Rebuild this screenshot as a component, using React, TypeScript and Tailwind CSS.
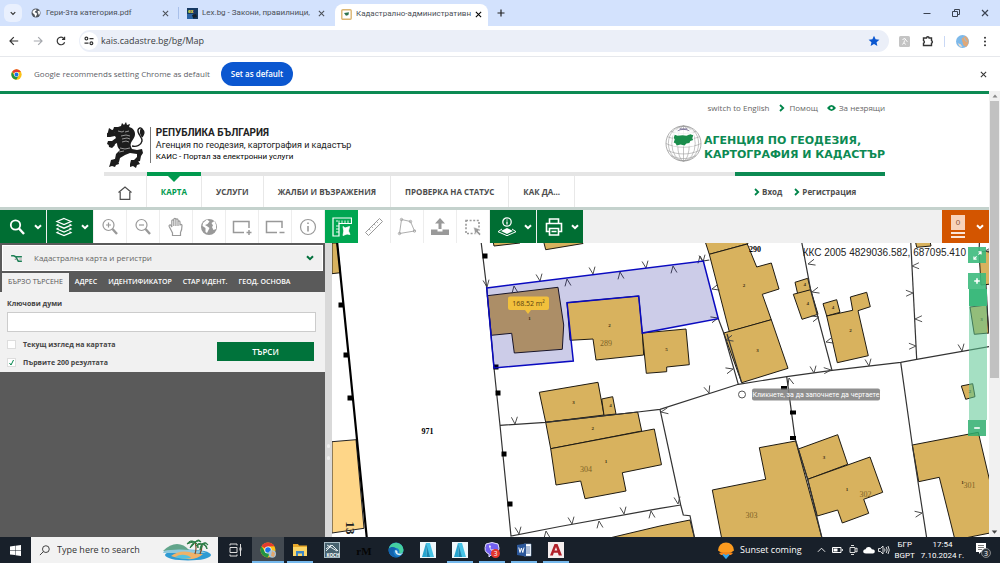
import { useState, type ReactNode } from 'react'

const NAV = ['УСЛУГИ', 'ЖАЛБИ И ВЪЗРАЖЕНИЯ', 'ПРОВЕРКА НА СТАТУС', 'КАК ДА...']
const SEARCH_TABS = ['БЪРЗО ТЪРСЕНЕ', 'АДРЕС', 'ИДЕНТИФИКАТОР', 'СТАР ИДЕНТ.', 'ГЕОД. ОСНОВА']

// map geometry, all in the same coordinate space as the map viewBox
const BUILDINGS = [
  '332,243 337,243 340.5,272.7 332,273.7',
  '493,241 494,246 520,243 520,241',
  '543.5,241 545.7,249.7 583,243.5 583,241',
  '567,302.7 638.7,296 642.3,333 643.7,355 596,360 593,339 570,340.3',
  '642.3,333 686,329 689.3,364.7 666.7,367 666.7,371.7 646.3,373.3',
  '705,241 709.3,254.3 748,243.7 747,241',
  '709.3,254.3 747.3,244 756.7,267 771.3,263 779,289 762.3,294.3 771.3,319.7 729.3,331.7',
  '723.7,333 771.3,319.7 788,368.3 741.7,382.7',
  '795,282.3 807.7,278.3 810.7,290 797.7,294',
  '793.3,294.3 810.7,289.7 818,314.3 802,319.3',
  '823,303.7 836.7,299.7 840,312.3 826.7,316',
  '826.7,316 852.7,310.3 850.3,297 866.7,292.3 870.3,306.7 858,310.7 868.3,355.7 837.3,362.7',
  '915.3,241 916.7,247.3 931,246 930,241',
  '979,251.7 992,251 992,284 981,285',
  '970,307 986.7,305 989,333 974.3,334.3',
  '961.3,386 972.7,383.7 975,396.7 965.7,399.3',
  '912.3,445 978.3,432.3 990,482 990,533 955,540 939.3,477.3 918.7,481.7',
  '759.3,447.7 795.7,441 822.5,540 722,540 712.3,490 765.7,479.3',
  '798.3,449 837.7,434.7 847.7,464.3 807.7,479.3',
  '807.7,479.3 870,457 882.7,492.3 863.7,499.3 868.7,513.3 842.3,523 837.7,510 817.3,516',
  '601,540 660,526 690,520 695,540',
  '539.3,392.3 598,382.3 604,415 545.7,422.3',
  '601.7,399 612.7,396.7 616,414 604,415.3',
  '545.7,422.3 637.7,412 641.7,431 550.7,448.7',
  '550.7,448.7 654.3,429 661.5,464.7 622.3,472.7 626,491 585,498.7 580.7,481 556,485',
]

const BOUNDARIES = [
  '481,241 486.7,288 494,368 500,425.3 511,536 560,526.5 660,508.3 680.7,505',
  '500,425.3 545.7,422.3 637.7,412 660,409.3 738.3,384.3 786.7,376.7 832,370.3 900.7,362.3 916.7,359.3 990,346.5',
  '718.3,318.7 723.7,333 738.3,384.3',
  '727,334 741.7,382.7',
  '703.3,261 709.3,260',
  '801.5,241 810.7,290 832,370.3',
  '910.7,241 916.7,359.3',
  '979.5,241 979,251.7',
  '986,285 988.5,332',
  '900.7,362.3 912.3,445 927,540',
  '786.7,376.7 795,438.3 807.7,479.3 822.5,540',
  '660,409.3 680.7,505 683.3,515 690,515.7 695,540',
]

// fence ticks: x, y of the tip and rotation (0 points down)
const TICKS: [number, number, number][] = [
  [487, 287, -8], [514, 286, 172], [540, 281, -8], [567, 279, 172], [593, 274, -8], [620, 272, 172],
  [646, 268, -8], [673, 266, 172], [700, 256, 172], [703, 262, -8], [712, 289, 75], [718, 318, -105],
  [726, 340, 75], [733, 369, -105], [808, 264, 75], [812, 292, 75], [819, 317, -105], [826, 342, 75],
  [831, 370, -95], [912, 266, 88], [913, 293, -92], [915, 319, 88], [916, 346, -92], [814, 373, -8],
  [869, 366, -8], [962, 351, -8], [709, 393, -18], [661, 412, 80], [789, 378, 165], [678, 504, -8],
  [922, 513, -100], [515, 424, -5], [519, 534, -8], [546, 531, 172], [572, 524, -8], [599, 521, 172],
  [624, 514, -8], [651, 511, 172], [985, 251, 85],
]

const POSTS = [
  [341, 305], [346, 355], [350, 398], [485, 256], [496, 367], [498, 393], [504, 454], [510, 504],
]

const HOUSE_NUMBERS: [number, number, string][] = [
  [529.5, 320, '1'], [609.5, 327, '2'], [666.5, 351, '5'], [744, 287, '2'], [757.5, 352, '3'],
  [804.7, 286, '4'], [807.7, 305, '4'], [833, 309, '4'], [850.5, 332, '2'], [981.5, 321, '3'],
  [970, 393, '2'], [962.5, 484, '1'], [824, 459, '3'], [847, 491, '1'], [573.5, 404, '3'],
  [610.5, 407, '4'], [592.7, 430, '2'], [606, 463, '1'],
]

const PARCEL_NUMBERS: [number, number, string][] = [
  [606, 346, '289'], [586, 472, '304'], [751.5, 518, '303'], [865.5, 497, '302'], [969.5, 488, '301'],
]

function Chevron({ className = '' }: { className?: string }) {
  return (
    <svg viewBox="0 0 8 6" className={`h-[6px] w-2 ${className}`} fill="none" stroke="currentColor" strokeWidth="2">
      <path d="M1 1.2l3 3 3-3" />
    </svg>
  )
}

function Arrow() {
  return (
    <svg viewBox="0 0 6 8" className="h-2 w-[6px] text-[#00854a]" fill="none" stroke="currentColor" strokeWidth="1.8">
      <path d="M1 1l3.2 3L1 7" />
    </svg>
  )
}

function Cross({ className = 'size-[7px]' }: { className?: string }) {
  return (
    <svg viewBox="0 0 8 8" className={className} stroke="currentColor" strokeWidth="1.2">
      <path d="M1 1l6 6M7 1L1 7" />
    </svg>
  )
}

function GlobeIcon({ className = '' }: { className?: string }) {
  return (
    <svg viewBox="0 0 16 16" className={className}>
      <circle cx="8" cy="8" r="7.2" fill="currentColor" />
      <path d="M4.5 3.2L8 1.8l1 2.2-2.3 1.2-.8 1.6 2.2.9 1.7 1.3-.7 2.2-1.6 2.8-1.2-.3-.3-3L4 9 2 6.5z" fill="#fff" />
      <path d="M10.8 5l2.6-1.2 1 3-.6 3.4-1.4.5-1-1.8.5-1.2-1.4-1.1z" fill="#fff" />
    </svg>
  )
}

function ChromeMark() {
  return (
    <>
      <circle cx="8" cy="8" r="7.5" fill="#fbc116" />
      <path d="M8 8L1.5 4.3A7.5 7.5 0 0 1 14.5 4.3L8 4.5z" fill="#e33b2e" />
      <path d="M1.5 4.3A7.5 7.5 0 0 0 7.6 15.5L11 9.8 5 9.7z" fill="#229342" />
      <circle cx="8" cy="8" r="3.6" fill="#fff" />
      <circle cx="8" cy="8" r="2.8" fill="#1a73e8" />
    </>
  )
}

function TabStrip() {
  return (
    <div className="flex h-[26px] items-center bg-[#d3e2fd] pl-1 font-['Roboto',sans-serif] text-[8px] text-[#4b5058]">
      <button aria-label="Search tabs" className="flex size-[18px] items-center justify-center rounded-md bg-[#e9f0fe] text-[#333]">
        <svg viewBox="0 0 8 6" className="h-[5px] w-[6px]" fill="none" stroke="currentColor" strokeWidth="1.6"><path d="M1 1.2l3 3 3-3" /></svg>
      </button>
      <div className="flex w-[157px] items-center gap-[5px] border-r border-[#a9c0ea] pl-[9px] pr-[9px]">
        <GlobeIcon className="size-[10px] text-[#50555c]" />
        <span className="flex-1 whitespace-nowrap">Гери-3та категория.pdf</span>
        <button aria-label="Close tab"><Cross /></button>
      </div>
      <div className="flex w-[156px] items-center gap-[4px] pl-[8px] pr-[10px]">
        <svg viewBox="0 0 11 11" className="size-[11px] shrink-0">
          <rect width="11" height="11" fill="#173a63" />
          <path d="M0 6h6v5H0z" fill="#2b64a4" />
          <text x="1" y="5" fontSize="5" fontWeight="700" fill="#f4e04b">ex</text>
          <path d="M5 7l4-1 1 3-4 1z" fill="#15202d" />
        </svg>
        <span className="flex-1 whitespace-nowrap">Lex.bg - Закони, правилници,</span>
        <button aria-label="Close tab"><Cross /></button>
      </div>
      <div className="mt-1 flex h-[22px] w-[153px] items-center gap-[4px] rounded-t-lg bg-white pb-[2px] pl-[6px] pr-[8px]">
        <svg viewBox="0 0 11 11" className="size-[11px] shrink-0">
          <rect x=".8" y=".8" width="9.4" height="9.4" rx="1" fill="#fff" stroke="#dcb672" strokeWidth="1.4" />
          <path d="M3 4l5-.8L7.4 6 5 6.8z" fill="#2f7350" />
        </svg>
        <span className="flex-1 whitespace-nowrap">Кадастрално-административн</span>
        <button aria-label="Close tab" className="text-black"><Cross /></button>
      </div>
      <button aria-label="New tab" className="ml-[9px] text-[#222]">
        <svg viewBox="0 0 8 8" className="size-2" stroke="currentColor" strokeWidth="1.2"><path d="M4 .5v7M.5 4h7" /></svg>
      </button>
      <div className="ml-auto flex items-center gap-[21px] pr-[11px] text-[#3a4250]">
        <button aria-label="Minimize"><svg viewBox="0 0 8 8" className="size-2" stroke="currentColor"><path d="M.5 4.5h7" /></svg></button>
        <button aria-label="Restore"><svg viewBox="0 0 8 8" className="size-2" fill="none" stroke="currentColor"><path d="M.5 2.5h5v5h-5zM2.5 2V.5h5v5H6" /></svg></button>
        <button aria-label="Close"><Cross className="size-2" /></button>
      </div>
    </div>
  )
}

function AddressBar() {
  return (
    <div className="flex h-[31px] items-center border-b border-[#e6e8ec] bg-white pl-[9px] text-[#333]">
      <button aria-label="Back" className="w-[11px]"><svg viewBox="0 0 10 10" className="size-[10px]" fill="none" stroke="currentColor" strokeWidth="1.2"><path d="M9.2 5H1.2M4.8 1.2L1 5l3.8 3.8" /></svg></button>
      <button aria-label="Forward" className="ml-[13px] w-[11px] text-[#a5a8ad]"><svg viewBox="0 0 10 10" className="size-[10px]" fill="none" stroke="currentColor" strokeWidth="1.2"><path d="M.8 5h8M5.2 1.2L9 5 5.2 8.8" /></svg></button>
      <button aria-label="Reload" className="ml-[12px] w-[11px]"><svg viewBox="0 0 10 10" className="size-[10px]" fill="none" stroke="currentColor" strokeWidth="1.2"><path d="M8.6 6.2A3.8 3.8 0 1 1 8 2.6M8.6.8v2.6H6" /></svg></button>
      <div className="ml-[12px] flex h-[22px] flex-1 items-center rounded-full bg-[#ebeff8] pl-[1px] pr-[9px]">
        <span className="flex size-[18px] items-center justify-center rounded-full bg-white">
          <svg viewBox="0 0 10 10" className="size-[10px]" fill="none" stroke="currentColor" strokeWidth="1.2"><path d="M5.5 2.6H9.5M.5 7.2h4" /><circle cx="2.4" cy="2.6" r="1.4" /><circle cx="7.4" cy="7.2" r="1.4" /></svg>
        </span>
        <input aria-label="Address" defaultValue="kais.cadastre.bg/bg/Map" className="ml-[3px] flex-1 bg-transparent text-[9px] text-[#3a3d42] outline-none" />
        <svg viewBox="0 0 24 24" className="size-3 text-[#0b57d0]" fill="currentColor"><path d="M12 1.5l3.2 7 7.6.8-5.7 5.1 1.6 7.5L12 18l-6.7 3.9 1.6-7.5L1.2 9.3l7.6-.8z" /></svg>
      </div>
      <div className="flex items-center pl-[10px] pr-[13px]">
        <svg viewBox="0 0 11 11" className="size-[11px]"><rect width="11" height="11" rx="1.5" fill="#c4c4c4" /><path d="M3.5 3.5L6 2.5l1 2 1.5 1M5.5 4.5L5 6.5l1.5 2M5 6.5l-1.5 2" stroke="#fff" fill="none" /></svg>
        <svg viewBox="0 0 12 12" className="ml-[12px] size-3" fill="none" stroke="currentColor" strokeWidth="1.4"><path d="M1.5 3h3a1.3 1.3 0 0 1 2.6 0h2.4v2.6a1.4 1.4 0 0 1 0 2.6v2.3h-8V8.2a1.4 1.4 0 0 0 0-2.6z" /></svg>
        <span className="ml-[10px] h-[11px] w-px bg-[#c9d8f5]" />
        <svg viewBox="0 0 14 14" className="ml-[11px] size-[13px]"><circle cx="7" cy="7" r="7" fill="#7db9ea" /><path d="M6 4l4-3c4 2 5 8 1 12L8 11z" fill="#e0a878" /><path d="M2 9l3 1 2 3-3-.5z" fill="#f3dcc5" /><path d="M9 3l1 3 2 1" stroke="#8ac3e8" fill="none" /></svg>
        <svg viewBox="0 0 4 12" className="ml-[14px] h-[11px] w-[4px]" fill="currentColor"><circle cx="2" cy="2" r="1.1" /><circle cx="2" cy="6" r="1.1" /><circle cx="2" cy="10" r="1.1" /></svg>
      </div>
    </div>
  )
}

function DefaultBrowserBar() {
  return (
    <div className="flex h-[34px] items-center bg-white pl-[11px] pr-[13px] text-[8px]">
      <svg viewBox="0 0 16 16" className="size-[11px]"><ChromeMark /></svg>
      <span className="ml-3 text-[#5d6066]">Google recommends setting Chrome as default</span>
      <button className="ml-[11px] h-6 rounded-full bg-[#0b57d0] px-[10px] text-[8px] font-semibold text-white">Set as default</button>
      <button aria-label="Dismiss" className="ml-auto text-[#333]"><Cross /></button>
    </div>
  )
}

function LionCrest() {
  return (
    <svg viewBox="0 0 38 46" className="h-[46px] w-[38px]" fill="#1c1c1c">
      <path d="M11 5l3-1 1-3 2 2 2-3 1 3 3-1-1 3c4 1 6 4 6 7 0 4-3 6-4 9-1 2 0 4 1 6l5 1 5-1 1 4-2 3-1 5-4 1-2-2 3-3v-3l-7-1-5 2-5 3-1 4-5 2-2-2 3-3 1-5 4-4c-2-2-3-4-3-7l-6 3-4-2 1-3 4 0 4-3-1-2-5 1-4 0-1-3 3-1 4 0 3-1-2-2 1-3z" />
      <path d="M25 24c5 1 9-1 10-5 .6-4-5-7-4-11 .5-2 3-3 4-1 3 3 2 5 0 8" fill="none" stroke="#1c1c1c" strokeWidth="1.4" />
      <path d="M34 6c3 1 4 6 1 9-2-2-3-6-1-9zM2 6l3 2 3-1 0 3-2 3-3-1-3 1 1-3zM1 19l3 2 3-1 1 3-3 3-3-1zM4 38l4-1 3 1 1 4-3 1-1 2-3-1-3 1 1-3zM24 38l4 0 3 1 2 3-3 1-1 3-3-2-3 1 0-3z" />
      <path d="M11 9l4 1 2-1M14 14l5-1 4 1M15 17l5-1 3 1M15 20l4-1 3 1M18 10l4-1M13 26l5 1 5-1M12 30l5-1" fill="none" stroke="#e5e5e5" strokeWidth=".6" />
    </svg>
  )
}

function AgencyGlobe() {
  return (
    <svg viewBox="0 0 38 38" className="size-[37px]" fill="none">
      <g stroke="#9a9a9a" strokeWidth=".6">
        <circle cx="19" cy="19" r="18" stroke="#777" />
        <ellipse cx="19" cy="19" rx="6" ry="18" />
        <ellipse cx="19" cy="19" rx="12" ry="18" />
        <ellipse cx="19" cy="19" rx="15.5" ry="18" />
        <path d="M19 1v36M6 6.5c8 3 18 3 26 0M2.5 12c10 4 23 4 33 0M1 19c10 5 26 5 36 0M2.5 26c10 5 23 5 33 0M6 31.5c8 4 18 4 26 0" />
      </g>
      <path d="M10 5h18l2 5v12H8V10z" fill="#fff" opacity=".8" />
      <path d="M13 6c3-2 9-2 12 0M15 4h8" stroke="#6f6690" strokeWidth=".8" />
      <path d="M10 10l3 1 5-.5 4 .5 4-1.5 3 1-1 3 1 2-3 1-1 2-3 .5-2 2-4-1-4 1-1-2-2-1 1-3-1-2z" fill="#1a8d4c" />
    </svg>
  )
}

function SiteHeader() {
  return (
    <header className="border-t-[3px] border-[#0c8a53] bg-white">
      <div className="mx-auto flex w-[79%] min-w-[781px] max-w-[1100px] flex-col">
        <div className="flex h-[28px] items-center justify-end text-[8px] text-[#666]">
          <a href="#en">switch to English</a>
          <a href="#help" className="ml-[10px] flex items-center gap-[4px]"><Arrow />Помощ</a>
          <a href="#access" className="ml-[9px] flex items-center gap-[3px]">
            <svg viewBox="0 0 9 6" className="h-[6px] w-[9px]"><path d="M0 3q4.5-6 9 0q-4.5 6-9 0" fill="#00854a" /><circle cx="4.5" cy="3" r="1.3" fill="#fff" /></svg>
            За незрящи
          </a>
        </div>
        <div className="flex h-[50px] items-start pl-[3px]">
          <LionCrest />
          <div lang="bg" className="ml-[5px] mt-[5px] flex h-[36px] flex-col justify-center border-l border-[#777] pl-[5px] font-['Roboto',sans-serif] text-[9px] leading-[12px] text-[#222]">
            <strong className="text-[10px]">РЕПУБЛИКА БЪЛГАРИЯ</strong>
            <span>Агенция по геодезия, картография и кадастър</span>
            <span className="text-[8px] text-black">КАИС - Портал за електронни услуги</span>
          </div>
          <div className="ml-auto mt-[3px] flex items-center gap-[2px] text-[#0c8a53]">
            <AgencyGlobe />
            <p lang="bg" className="pt-[8px] font-['DejaVu_Sans',sans-serif] text-[11px] font-bold leading-[14px]">АГЕНЦИЯ ПО ГЕОДЕЗИЯ,<br />КАРТОГРАФИЯ И КАДАСТЪР</p>
          </div>
        </div>
        <div className="flex h-[4px] bg-[#e5e5e5]">
          <span className="ml-auto w-[150px] bg-[#0c8a53]" />
        </div>
        <nav className="flex h-[31px] items-stretch text-[8px] font-bold text-[#4d4d4d]">
          <a href="#home" aria-label="Начало" className="flex w-[43px] items-center justify-center border-r border-[#e8e8e8]">
            <svg viewBox="0 0 16 16" className="mt-[3px] size-4" fill="none" stroke="currentColor" strokeWidth="1.2"><path d="M1.5 7.5L8 2l6.5 5.5M3.2 7v7.3h9.6V7" /></svg>
          </a>
          <a href="#map" className="relative flex items-center border-r border-[#e8e8e8] px-[14px] text-[#009a4e]">
            <span className="absolute -top-[4px] left-0 right-0 h-[4px] bg-[#009a4e]" />
            <svg viewBox="0 0 12 6" className="absolute left-1/2 top-0 h-[6px] w-3 -translate-x-1/2" fill="#009a4e"><path d="M0 0h12L6 6z" /></svg>
            КАРТА
          </a>
          {NAV.map((item) => (
            <a key={item} href="#section" className="flex items-center border-r border-[#e8e8e8] px-[14px]">{item}</a>
          ))}
          <a href="#login" className="ml-auto flex items-center gap-[2px]"><Arrow />Вход</a>
          <a href="#register" className="ml-[12px] mr-[29px] flex items-center gap-[2px]"><Arrow />Регистрация</a>
        </nav>
      </div>
    </header>
  )
}

function Tool({ label, active, children }: { label: string; active?: boolean; children: ReactNode }) {
  return (
    <button
      aria-label={label}
      className={`flex w-[33px] items-center justify-center ${active ? 'bg-[#00a651] text-white' : 'border-r border-[#ededed] bg-white text-[#999]'}`}
    >
      <svg viewBox="0 0 20 20" className="size-5" fill="none" stroke="currentColor" strokeWidth="1.2">{children}</svg>
    </button>
  )
}

function MenuTool({ label, children }: { label: string; children: ReactNode }) {
  return (
    <button aria-label={label} className="mr-px flex w-[46px] items-center justify-between bg-[#006e33] pl-[7px] pr-[4px] text-white">
      <svg viewBox="0 0 20 20" className="size-5" fill="none" stroke="currentColor" strokeWidth="1.3">{children}</svg>
      <Chevron />
    </button>
  )
}

function MapToolbar() {
  return (
    <div className="flex h-[36px] shrink-0 border-t-[3px] border-[#c4d2cd] bg-[#f0f0f0]">
      <MenuTool label="Търсене"><circle cx="8.5" cy="8" r="4.7" strokeWidth="1.8" /><path d="M12 11.5l5 5.5" strokeWidth="2.4" /></MenuTool>
      <MenuTool label="Слоеве"><path d="M10 1.5l7 3-7 3-7-3zM4.500 7.300L3 8.200l7 3 7-3-1.500-.9M4.500 11L3 12l7 3 7-3-1.500-1M4.500 14.700L3 15.600l7 3 7-3-1.500-.9" /></MenuTool>
      <Tool label="Увеличи"><circle cx="8.5" cy="8" r="5.5" /><path d="M8.5 5.5v5M6 8h5" /><path d="M12.5 12l4.5 5" strokeWidth="2.4" /></Tool>
      <Tool label="Намали"><circle cx="8.5" cy="8" r="5.5" /><path d="M6 8h5" /><path d="M12.5 12l4.5 5" strokeWidth="2.4" /></Tool>
      <Tool label="Премести"><path d="M5.5 14L3.2 9.500c-.6-1.500 1-2.300 1.800-1l.8 1.500V4c0-1.600 2-1.600 2 0v5V2.500c0-1.600 2.100-1.600 2.100 0V9 3c0-1.600 2.100-1.600 2.100 0v6V5c0-1.600 2-1.600 2 0v3.500c0-1.400 2-1.400 2 0 0 3-.3 5-1.500 7v3h-8v-2.500z" /></Tool>
      <Tool label="Цялата карта"><circle cx="10" cy="10" r="8" fill="currentColor" stroke="none" /><path d="M4 6l4-3.500 2.500 2-2 2.500-2.500 1 2.500 1.500 2 1.500-2.500 5-1.500-1V11L3.500 9zM12.500 6l3-2 1.500 4v4l-2.500 1-1.500-3 1-1.500z" fill="#fff" stroke="none" /></Tool>
      <Tool label="Увеличи област"><path d="M12 15.500H1.500v-11H17v6.500" strokeWidth="1.5" /><path d="M14.500 15.500h5M17 13v5" strokeWidth="1.5" /></Tool>
      <Tool label="Намали област"><path d="M12 15.500H1.500v-11H17v6.500" strokeWidth="1.5" /><path d="M14.500 15.500h5" strokeWidth="1.5" /></Tool>
      <Tool label="Информация"><circle cx="10" cy="10" r="7.5" /><path d="M10 9v5.500M10 5.500v1.500" strokeWidth="1.6" /></Tool>
      <Tool label="Измерване" active>
        <path d="M1 1h18.500v5.500H7V19H1z" />
        <path d="M7 3.500v3M10 3.500v3M13 3.500v3M16 3.500v3M4 9h3M4 12h3M4 15h3M4 4h2" strokeWidth=".9" />
        <path d="M11 9.500l2 1.500 4.500-1.500-1 4.500 1.500 3.500-3-.5-4 1.500.8-4.500z" fill="currentColor" strokeWidth=".8" />
      </Tool>
      <Tool label="Разстояние"><path d="M1.500 15.500L15.500 1.500l3 3L4.500 18.500z" strokeWidth="1" /><path d="M5 12l1.500 1.500M7.500 9.500L9 11M10 7l1.500 1.500M12.500 4.500L14 6" strokeWidth=".8" /></Tool>
      <Tool label="Площ"><g strokeWidth=".8"><path d="M4.500 2.500l9 2 4 9.500-15 2.500z" /><circle cx="4.5" cy="2.5" r="1.2" /><circle cx="13.5" cy="4.5" r="1.2" /><circle cx="17.5" cy="14" r="1.2" /><circle cx="2.5" cy="16.5" r="1.2" /></g></Tool>
      <Tool label="Качи"><path d="M1 12.500h6.500v2h5v-2H19v5.500H1zM8.500 12V6.500H5L10 1l5 5.500h-3.500V12z" fill="currentColor" stroke="none" /></Tool>
      <Tool label="Избери"><path d="M3 3.500h13v13H3z" strokeWidth="1.6" strokeDasharray="2 1.6" /><path d="M10.500 10l7 2.500-2.500 1.500 3 3-1.500 1.500-3-3-1.200 2.500z" fill="currentColor" stroke="#fff" strokeWidth=".6" /></Tool>
      <MenuTool label="Информация за слой"><circle cx="10" cy="5" r="4.2" /><path d="M10 4.500v3M10 2.500v1" /><path d="M5 12l-4 2.700 9 4 9-4L15 12" strokeWidth="1" /><path d="M10 11l6 3-6 3-6-3z" fill="currentColor" stroke="none" /></MenuTool>
      <MenuTool label="Печат"><path d="M5.500 6V2h9v4M5 14.500H2.500v-8h15v8H15M5.500 11.500h9V18h-9zM7.500 14.500h5" strokeWidth="1.6" /></MenuTool>
      <button aria-label="Избрани обекти" className="ml-auto flex w-[47px] items-center justify-between bg-[#d35500] pl-[9px] pr-[5px] text-white">
        <span className="flex w-[14px] flex-col gap-[2px]">
          <span className="h-[15px] bg-[#f8d3bb] text-center font-['Liberation_Sans',sans-serif] text-[8px] leading-[15px] text-[#8a5638]">0</span>
          <span className="h-[2px] bg-[#fbe5d8]" />
          <span className="h-[2px] bg-[#fbe5d8]" />
        </span>
        <Chevron />
      </button>
    </div>
  )
}

function SearchPanel() {
  const [tab, setTab] = useState(0)
  return (
    <aside className="w-[325px] shrink-0 bg-[#5a5a5a]">
      <div className="relative mx-[2px] mt-[2px] flex h-[26px] items-center border border-white bg-[#f0f0f0]">
        <svg viewBox="0 0 14 10" className="pointer-events-none absolute left-[7px] h-[9px] w-[13px]" fill="none" stroke="#1d7f55" strokeWidth="1.2"><path d="M1 2h3l2 1h7M6 3l3 5h4" strokeWidth="1.7" /><path d="M5 6l2 0M10 5.500l3 0" stroke="#999" /></svg>
        <select aria-label="Източник" className="h-full w-full appearance-none bg-transparent pl-[31px] text-[8px] text-[#666] outline-none">
          <option>Кадастрална карта и регистри</option>
        </select>
        <Chevron className="pointer-events-none absolute right-[8px] text-[#00703c]" />
      </div>
      <div role="tablist" className="mt-[2px] flex h-[19px] gap-px px-[2px] text-[7px] font-semibold text-white">
        {SEARCH_TABS.map((t, i) => (
          <button
            key={t}
            role="tab"
            aria-selected={i === tab}
            onClick={() => setTab(i)}
            className={i === tab ? 'bg-[#f1f1f1] px-[6px] font-normal text-[#555]' : 'px-[5px]'}
          >
            {t}
          </button>
        ))}
      </div>
      <form className="bg-[#f1f1f1] pb-[4px] pl-[7px] pr-[9px] pt-[6px] text-[7px] font-bold leading-[11px] text-[#444]" onSubmit={(e) => e.preventDefault()}>
        <label htmlFor="keywords" className="block">Ключови думи</label>
        <input id="keywords" className="mt-[3px] block h-5 w-full border border-[#ccc] bg-white px-1 text-[8px] font-normal outline-none" />
        <div className="mt-[7px] flex items-start justify-between">
          <div className="flex flex-col gap-[7px]">
            <label className="flex items-center gap-[7px]">
              <input type="checkbox" className="size-[9px] appearance-none border border-[#ddd] bg-white" />
              Текущ изглед на картата
            </label>
            <label className="flex items-center gap-[7px]">
              <span className="relative flex">
                <input type="checkbox" defaultChecked className="peer size-[9px] appearance-none border border-[#ddd] bg-white" />
                <svg viewBox="0 0 9 9" className="pointer-events-none absolute inset-0 hidden size-[9px] peer-checked:block" fill="none" stroke="#00854a"><path d="M2.500 5l1.500 2L6.500 2" /></svg>
              </span>
              Първите 200 резултата
            </label>
          </div>
          <button className="mr-[2px] mt-[3px] h-[19px] w-[97px] bg-[#00733b] text-[8px] font-semibold text-white">ТЪРСИ</button>
        </div>
      </form>
    </aside>
  )
}

function CadastreMap() {
  return (
    <svg viewBox="332 243 657 294" preserveAspectRatio="xMinYMin slice" className="absolute inset-0 h-full w-full" role="img" aria-label="Кадастрална карта">
      <rect x="332" y="243" width="657" height="294" fill="#fff" />
      <path d="M332 441.700L356 439.700L364 528.300L332 533z" fill="#fed688" stroke="#222" />
      <g fill="#d8b25e" stroke="#1e1a12" strokeLinejoin="round">
        {BUILDINGS.map((points) => <polygon key={points} points={points} />)}
        <polygon points="487.3,295.7 558,287.3 563.7,325 562.3,349.3 514.3,353 511.7,333.3 491.3,335.3" />
      </g>
      <g fill="none" stroke="#333" strokeWidth="1.2">
        {BOUNDARIES.map((points) => <polyline key={points} points={points} />)}
      </g>
      <polyline points="337,241 350.3,372 367,540" fill="none" stroke="#000" strokeWidth="2.2" />
      <g fill="none" stroke="#444" strokeWidth=".9">
        {TICKS.map(([x, y, r]) => (
          <path key={`${x}-${y}`} d="M-3-7L0 0L3-7" transform={`translate(${x} ${y}) rotate(${r})`} />
        ))}
      </g>
      {POSTS.map(([x, y]) => <rect key={`${x}-${y}`} x={x - 2.5} y={y - 2.5} width="5" height="5" />)}
      <path d="M781 386h6v4h-6zM790 410.500h6v4h-6zM790 436h6v4h-6z" />
      {/* selected parcel; the second house is cut out of it */}
      <polygon
        points="486.7,288 703.3,261 718.3,318.7 642.3,333 638.7,296 567,302.7 573.3,361 494,368"
        fill="#00008b"
        fillOpacity=".2"
        stroke="#0a0ac0"
        strokeWidth="1.5"
      />
      <g fontFamily="'Liberation Serif', serif" textAnchor="middle">
        <g fontSize="5" fontWeight="700" fill="#3a2d14">
          {HOUSE_NUMBERS.map(([x, y, n]) => <text key={`${x}-${y}`} x={x} y={y}>{n}</text>)}
        </g>
        <g fontSize="8" fill="#7d6226">
          {PARCEL_NUMBERS.map(([x, y, n]) => <text key={n} x={x} y={y}>{n}</text>)}
        </g>
        <text x="427.5" y="434" fontSize="8" fontWeight="700">971</text>
        <text x="755" y="252" fontSize="8" fontWeight="700">290</text>
        <text transform="translate(346 528) rotate(90)" fontSize="13" fontWeight="700" fill="#222">13</text>
      </g>
      <path d="M510 296.500h37q2 0 2 2v9.500q0 2-2 2H531l-3 4-3-4h-15q-2 0-2-2v-9.500q0-2 2-2z" fill="#f1c03c" />
      <text x="528.5" y="305.5" textAnchor="middle" fontSize="7" fontFamily="'Open Sans', sans-serif" fill="#5a4010">168.52 m²</text>
      <circle cx="742" cy="394.5" r="3.5" fill="#fff" stroke="#555" />
      <rect x="752" y="388.5" width="128" height="12" rx="2" fill="#808080" fillOpacity=".88" />
      <text x="816" y="397" textAnchor="middle" fontSize="7" fontFamily="Roboto, sans-serif" fill="#fff">Кликнете, за да започнете да чертаете</text>
    </svg>
  )
}

function MapView() {
  const [zoom, setZoom] = useState(100)
  return (
    <main className="relative min-w-0 flex-1 overflow-hidden bg-white">
      <CadastreMap />
      <p className="absolute right-[23px] top-[4px] font-['Liberation_Sans',sans-serif] text-[10px] leading-3 text-[#222]">ККС 2005 4829036.582, 687095.410</p>
      <div className="absolute right-[3px] top-[4px] flex w-[18px] flex-col items-stretch text-white">
        <button aria-label="Цял екран" className="flex h-4 items-center justify-center bg-[#3dba7d]/90">
          <svg viewBox="0 0 10 10" className="size-[9px]" fill="none" stroke="currentColor" strokeWidth="1.2"><path d="M6 1h3v3M9 1L6 4M1 6v3h3M1 9l3-3" /></svg>
        </button>
        <button aria-label="Приближи" className="mt-[10px] flex h-4 items-center justify-center bg-[#3dba7d]/90">
          <svg viewBox="0 0 8 8" className="size-2" stroke="currentColor" strokeWidth="1.6"><path d="M4 1.200v5.600M1.200 4h5.600" /></svg>
        </button>
        <input
          type="range"
          aria-label="Мащаб"
          value={zoom}
          onChange={(e) => setZoom(Number(e.target.value))}
          className="my-px h-[131px] w-[18px] appearance-none bg-[#5bc792]/55 [direction:rtl] [writing-mode:vertical-lr] [&::-webkit-slider-thumb]:h-[17px] [&::-webkit-slider-thumb]:w-[18px] [&::-webkit-slider-thumb]:appearance-none [&::-webkit-slider-thumb]:bg-[#3dba7d]"
        />
        <button aria-label="Отдалечи" className="flex h-4 items-center justify-center bg-[#2fae6e]/85">
          <svg viewBox="0 0 8 8" className="size-2" stroke="currentColor" strokeWidth="1.6"><path d="M1.200 4h5.600" /></svg>
        </button>
      </div>
    </main>
  )
}

function PageScrollbar() {
  return (
    <div className="flex w-[11px] shrink-0 flex-col items-center bg-[#f1f1f1]">
      <svg viewBox="0 0 10 10" className="size-[10px] shrink-0" fill="#888"><path d="M5 3.500L7.500 6.500h-5z" /></svg>
      <div className="h-[62%] w-[9px] bg-[#c1c1c1]" />
      <svg viewBox="0 0 10 10" className="mt-auto size-[11px]" fill="#444"><path d="M5 7L7.500 4h-5z" /></svg>
    </div>
  )
}

function TaskItem({ label, open, active, children }: { label: string; open?: boolean; active?: boolean; children: ReactNode }) {
  return (
    <button aria-label={label} className={`relative flex w-8 items-center justify-center ${active ? 'bg-[#434a51]' : ''}`}>
      <svg viewBox="0 0 16 16" className="size-4">{children}</svg>
      {open && <span className={`absolute bottom-0 h-[2px] bg-[#76b9ed] ${active ? 'w-8' : 'w-[26px]'}`} />}
    </button>
  )
}

function NApp() {
  return (
    <>
      <rect width="16" height="16" fill="#eef7fb" />
      <path d="M2 15L6 1l1 14z" fill="#27a5cf" />
      <path d="M6 1h4l4 14H8z" fill="#45c3e6" />
      <path d="M6 1l4 14H7z" fill="#1d84ad" />
    </>
  )
}

function Taskbar() {
  return (
    <footer className="flex h-[26px] shrink-0 items-stretch bg-[#18202a] text-white">
      <button aria-label="Start" className="flex w-[31px] items-center justify-center">
        <svg viewBox="0 0 12 12" className="size-[11px]" fill="#fff"><path d="M0 1.500L5.500.8v4.900H0zM6 .7L12 0v5.700H6zM0 6.200h5.500V11L0 10.300zM6 6.200h6V12l-6-.8z" /></svg>
      </button>
      <label className="flex w-[187px] items-center bg-[#f2f2f2] pl-2">
        <svg viewBox="0 0 12 12" className="size-[11px]" fill="none" stroke="#333"><circle cx="7.5" cy="4.5" r="3.7" /><path d="M4.800 7.200L1 11" /></svg>
        <input aria-label="Search" placeholder="Type here to search" className="ml-[7px] w-[104px] bg-transparent text-[9px] outline-none placeholder:text-[#333]" />
        <svg viewBox="0 0 50 24" className="h-6 w-[50px]">
          <ellipse cx="27" cy="17" rx="23" ry="5.5" fill="#2f9bd3" />
          <path d="M2 13q7-7 14-7t12 6z" fill="#62a58b" />
          <path d="M3 13q12-3 38 0l4 2H2z" fill="#90c9dd" />
          <path d="M10 18q8-6 18-4t14 2q-6 6-16 5t-16-3z" fill="#f0b269" />
          <path d="M14 19q5-3 10-2t6 3q-9 2-16-1z" fill="#55c1df" />
          <path d="M34 16q2-6 0-12M39 16q2-4 2-10" stroke="#7a4b2b" fill="none" strokeWidth="1.2" />
          <path d="M34 4q-5-3-8 2 4-2 8-2-4 2-5 6 4-3 5-6 3 2 3 6 1-4-3-6 4-2 6 0-2-4-6 0zM41 6q-4-2-6 2 3-2 6-2-2 2-2 6 3-3 2-6 4 1 5 5 0-5-5-5 4-2 6 1-2-4-6-1z" fill="#2c7d45" stroke="#2c7d45" />
        </svg>
      </label>
      <div className="ml-[2px] flex">
        <TaskItem label="Task view"><g fill="none" stroke="#ddd"><path d="M2 3.500V2h7v1.500M2 12.500V14h7v-1.500M2 5.500h7v5H2zM12.500 2v12" /><path d="M12.500 5.500v3" strokeWidth="2" /></g></TaskItem>
        <TaskItem label="Chrome" open active>
          <ChromeMark />
          <circle cx="12.3" cy="12" r="3.7" fill="#a9c4d6" />
          <path d="M12 9l3 2-1 4-3-1z" fill="#e2a66c" />
        </TaskItem>
        <TaskItem label="File Explorer" open><path d="M1 2h5l1 1.500h8V13H1z" fill="#e9a92b" /><path d="M1 5h14v9H1z" fill="#fcd667" /><path d="M4 14V9h8v5h-2v-2.500H6V14z" fill="#3d86c6" /></TaskItem>
        <TaskItem label="Survey"><rect x=".5" y=".5" width="15" height="15" fill="#47626f" stroke="#a6bac3" /><path d="M2 9L8 3l6 6M3 3l10 6M2 7l5-4" stroke="#e6eef1" fill="none" /><text x="2.5" y="14.5" fontSize="4.5" fontWeight="700" fill="#fff">KOCH</text></TaskItem>
        <TaskItem label="rM"><text x="8" y="12.5" textAnchor="middle" fontSize="11" fontWeight="700" fontFamily="'Liberation Serif', serif" fill="#050505">rM</text></TaskItem>
        <TaskItem label="Edge"><circle cx="8" cy="8" r="7.5" fill="#1b7fcb" /><path d="M.6 7A7.500 7.500 0 0 1 15.500 8c0 3-2.500 4-4.500 3.600 1-1.500.5-5.600-3-5.600C4 5 1.500 6 .6 7z" fill="#45cfa0" /><path d="M.6 7c2-3 7-2.500 8 .5-2-.5-3.500 1-3 3.500s3 4.500 6 3.500C7 17 0 14 .6 7z" fill="#1263ad" /><path d="M7 8.500c2-.8 3 1.200 2.500 2.500 2 1.200 4 .8 5.500-.3-2 4-8 3-8-2.200z" fill="#d9edf7" /></TaskItem>
        <TaskItem label="nanoCAD"><NApp /></TaskItem>
        <TaskItem label="nanoCAD drawing" open><NApp /></TaskItem>
        <TaskItem label="Viber" open><path d="M2 2q6-3 12 0 2 4 0 9-3 3-7 2l-2 2v-3Q-1 10 2 2z" fill="#7360f2" stroke="#e5e0ff" /><path d="M5 4q1 5 5 6l1-2-2-1-1 1-2-2 1-1-1-2z" fill="#fff" /><circle cx="11.5" cy="11.5" r="4.5" fill="#e3362d" /><text x="11.5" y="14" textAnchor="middle" fontSize="6.5" fill="#fff">3</text></TaskItem>
        <TaskItem label="Word" open><path d="M8 2h7v12H8z" fill="#fff" stroke="#8fb0dc" strokeWidth=".5" /><path d="M10 5h4M10 7h4M10 9h4M10 11h4" stroke="#2b579a" strokeWidth=".8" /><path d="M1 3l9-1.500v13L1 13z" fill="#2b579a" /><path d="M2.800 5.500L4 10.500l1.400-4.500 1.400 4.500 1.200-5" fill="none" stroke="#fff" /></TaskItem>
        <TaskItem label="AutoCAD" open><rect width="16" height="16" fill="#f6eeee" /><path d="M2 13.500L6.500 2h3L14 13.500h-3.200l-1-2.700H5.800l-.9 2.700zM6.500 8.500h2.800L8 5z" fill="#b3202a" /></TaskItem>
      </div>
      <div className="ml-auto flex items-center pr-[9px] text-[8px]">
        <svg viewBox="0 0 16 17" className="h-[17px] w-4"><path d="M0 8.500a8 8 0 0 1 16 0l-3 2H3z" fill="#fb9b1f" /><path d="M1 11l4-1h6l4 1-2 2H3z" fill="#f5861a" /><path d="M5 12.500L8 16l3-3.500L8 14z" fill="#36a5e8" stroke="#36a5e8" strokeWidth="1.5" /></svg>
        <span className="ml-[6px] text-[9px]">Sunset coming</span>
        <svg viewBox="0 0 10 6" className="ml-[15px] h-[6px] w-[9px]" fill="none" stroke="#fff"><path d="M1 5l4-4 4 4" /></svg>
        <svg viewBox="0 0 11 8" className="ml-[6px] h-2 w-[11px]" fill="none" stroke="#fff"><path d="M.5 1.500h8.500v5H.5zM10.300 3v2" /><path d="M1.500 2.500h4v3h-4z" fill="#fff" stroke="none" /></svg>
        <svg viewBox="0 0 9 10" className="ml-[6px] h-[10px] w-[9px]" fill="none" stroke="#ddd"><path d="M1 2.500h5v5H1zM2 .5h3M2 9.500h3M6 4l2-1v4L6 6" /></svg>
        <svg viewBox="0 0 12 8" className="ml-[5px] h-2 w-3" fill="#fff"><path d="M3 7.500Q0 7.500.2 5 .6 3.300 2.500 3.300 3.500.5 6.200 1q2 .3 2.600 2.300 3 0 3 2.200T9.500 7.500z" /></svg>
        <svg viewBox="0 0 12 10" className="ml-[3px] h-[10px] w-3" fill="none" stroke="#eee" strokeWidth=".9"><path d="M.5 3.500h2L5 1v8L2.500 6.500h-2zM6.500 3.500q1 1.500 0 3M8.200 2q2 3 0 6M10 1q2.500 4 0 8" /></svg>
        <span className="ml-[5px] text-center font-['Roboto',sans-serif] leading-[11px]">БГР<br />BGPT</span>
        <time className="ml-[6px] text-center font-['Roboto',sans-serif] leading-[11px]">17:54<br />7.10.2024 г.</time>
        <svg viewBox="0 0 16 16" className="ml-[11px] size-4"><path d="M1 1h10v9H6l-2 2v-2H1z" fill="#fff" /><path d="M3 3.500h6M3 5.500h6M3 7.500h4" stroke="#444" strokeWidth=".7" /><circle cx="11" cy="11" r="4.5" fill="#2b333b" stroke="#aaa" strokeWidth=".7" /><text x="11" y="13.5" textAnchor="middle" fontSize="7" fill="#fff">3</text></svg>
      </div>
    </footer>
  )
}

export default function App() {
  return (
    <div className="flex h-screen flex-col overflow-hidden bg-white font-['Open_Sans','Noto_Sans',sans-serif]">
      <TabStrip />
      <AddressBar />
      <DefaultBrowserBar />
      <div className="flex min-h-0 flex-1">
        <div className="flex min-w-0 flex-1 flex-col">
          <SiteHeader />
          <MapToolbar />
          <div className="flex min-h-0 flex-1">
            <SearchPanel />
            <div className="flex w-[7px] shrink-0 flex-col items-center justify-end gap-2 bg-[#d9d9d9] pb-[77px]">
              <span className="h-1 w-[3px] rounded-full bg-[#eee]" />
              <span className="h-1 w-[3px] rounded-full bg-[#eee]" />
            </div>
            <MapView />
          </div>
        </div>
        <PageScrollbar />
      </div>
      <Taskbar />
    </div>
  )
}
